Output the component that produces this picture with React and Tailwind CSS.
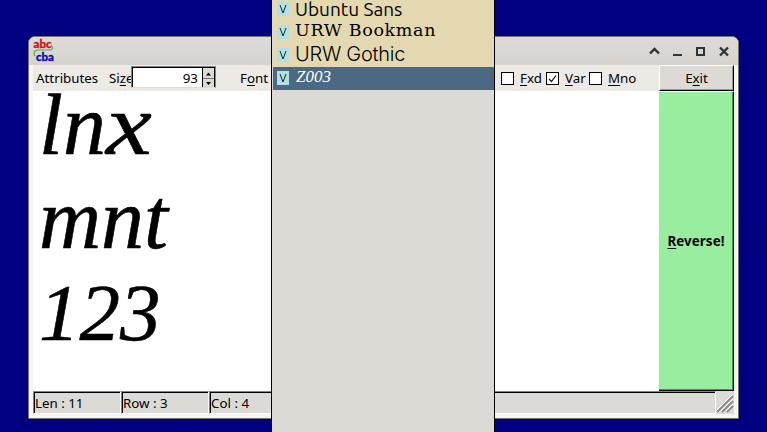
import React from "react";

const fontRows = [
  { name: "Ubuntu Sans", cls: "font-['Ubuntu_Sans','Ubuntu','Noto_Sans',sans-serif] text-[19px] tracking-[0px] top-[0px]" },
  { name: "URW Bookman", cls: "font-['URW_Bookman','DejaVu_Serif',serif] text-[17.5px] tracking-[0.65px] top-[-2px]" },
  { name: "URW Gothic", cls: "font-['Inter',sans-serif] font-light text-[20px] tracking-[-0.25px] top-[-1px]" },
  { name: "Z003", cls: "font-['Z003','Liberation_Serif',serif] italic text-[17px] top-[-2px] left-[1px]", selected: true },
];

function U({ children }) {
  return <span className="underline decoration-1 underline-offset-2">{children}</span>;
}

function AppIcon() {
  return (
    <svg width="24" height="24" viewBox="0 0 24 24" className="relative top-[-1px] shrink-0">
      <path d="M19 7 Q23 12 17 12 H6 Q0 13 3 18" fill="none" stroke="#4caf50" strokeWidth="1.2" />
      <text x="1.5" y="10" textLength="18" lengthAdjust="spacingAndGlyphs" fontFamily="Lato" fontWeight="900" fontSize="11.5" fill="#d40f1c" stroke="#d40f1c" strokeWidth=".3">abc</text>
      <text x="4" y="22.5" textLength="18" lengthAdjust="spacingAndGlyphs" fontFamily="Lato" fontWeight="900" fontSize="11.5" fill="#0c0ca8" stroke="#0c0ca8" strokeWidth=".3">cba</text>
    </svg>
  );
}

function WindowControls() {
  return (
    <svg width="84" height="14" viewBox="0 0 84 14" fill="none" stroke="#2e3436" strokeWidth="2">
      <path d="M2 9.5 L6.5 5 L11 9.5" strokeWidth="2.4" />
      <path d="M25 11 H34" />
      <path d="M49 4 H56 V11 H49 Z" />
      <path d="M72 3.5 L80 11.5 M80 3.5 L72 11.5" strokeWidth="2.4" />
    </svg>
  );
}

function Check({ checked }) {
  return (
    <span className="flex h-[13px] w-[13px] shrink-0 items-center justify-center border border-black bg-white">
      {checked && (
        <svg width="9" height="9" viewBox="0 0 9 9" fill="none" stroke="#111" strokeWidth="1.2">
          <path d="M1 5 L3.5 7.5 L8 1.5" />
        </svg>
      )}
    </span>
  );
}

function VIcon() {
  return (
    <svg width="12" height="14" viewBox="0 0 12 14" className="relative top-[-1px] shrink-0">
      <rect width="12" height="14" fill="#b0e0e6" />
      <path d="M3 3 L6 11 L9 3" fill="none" stroke="#18282c" strokeWidth="1" />
    </svg>
  );
}

function Cell({ children, cls }) {
  return (
    <div className={"h-[23px] border border-t-[#85837f] border-l-[#85837f] border-r-white border-b-white pl-[1px] leading-[22px] shadow-[inset_1px_1px_#000] " + cls}>
      {children}
    </div>
  );
}

export default function App() {
  return (
    <div className="relative h-[432px] w-[767px] overflow-hidden bg-[#000080] pl-[28px] pt-[36px] font-['Noto_Sans',sans-serif] text-[13.33px] text-black">
      <div className="flex h-[383px] w-[711px] flex-col rounded-t-[7px] border border-[#77736f] bg-[#f6f5f4]">
        <div className="flex h-[28px] shrink-0 items-center justify-between rounded-t-[6px] bg-gradient-to-b from-[#dedad7] to-[#d6d2ce] pl-[3px] pr-[6px]">
          <AppIcon />
          <WindowControls />
        </div>

        <div className="ml-[4px] flex h-[326px] w-[701px] shrink-0">
          <div className="flex w-[626px] flex-col bg-white">
            <div className="flex h-[26px] shrink-0 items-center bg-[#edeae6] pl-[3px] whitespace-nowrap">
              <span className="relative top-[1px] w-[73px]">Attributes</span>
              <span className="relative top-[1px] w-[22px]">Si<U>z</U>e</span>
              <div className="relative top-[-1px] flex h-[22px] w-[85px] border border-t-[#85837f] border-l-[#85837f] border-r-[#85837f] border-b-[#ddd] bg-white shadow-[inset_1px_1px_#000]">
                <span className="flex-1 pr-[4px] text-right leading-[23px]">93</span>
                <span className="mt-[1px] flex w-[13px] border-l border-r border-black bg-[#dcdad5]">
                  <svg width="11" height="19" viewBox="0 0 11 19">
                    <path d="M3 7.5 L5.5 4.5 L8 7.5 Z M3 14 L5.5 17 L8 14 Z" />
                    <path d="M0 10.5 H11" stroke="#777" />
                  </svg>
                </span>
              </div>
              <span className="relative top-[1px] ml-[24px] w-[261px]">F<U>o</U>nt</span>
              <Check />
              <span className="relative top-[1px] ml-[6px] w-[26px]"><U>F</U>xd</span>
              <Check checked />
              <span className="relative top-[1px] ml-[6px] w-[24px]"><U>V</U>ar</span>
              <Check />
              <span className="relative top-[1px] ml-[6px]"><U>M</U>no</span>
            </div>
            <div className="flex h-[300px] flex-col overflow-hidden pl-[6px] font-['Z003','Liberation_Serif',serif] text-[86px] italic leading-[94px] [-webkit-text-stroke:0.6px_black]">
              <div className="mt-[-13px]">ln<span className="inline-block origin-left scale-x-[1.2]">x</span></div>
              <div>mnt</div>
              <div className="text-[81px]">123</div>
            </div>
          </div>
          <div className="flex w-[75px] flex-col">
            <div className="flex h-[26px] shrink-0 items-center justify-center border-t border-l border-r border-b border-t-white border-l-white border-r-black border-b-black bg-[#dcdad5] shadow-[inset_-1px_-1px_#999]">
              <span className="relative top-[1px]">E<U>x</U>it</span>
            </div>
            <div className="flex flex-1 items-center justify-center border-t border-r border-b border-t-white border-r-black border-b-black bg-[#98ee9e] font-bold shadow-[inset_-1px_-1px_#30a048]">
              <span className="relative top-[1px] tracking-[0.1px]"><U>R</U>everse!</span>
            </div>
          </div>
        </div>

        <div className="ml-[4px] flex h-[23px] w-[701px] shrink-0 bg-[#dcdad5]">
          <Cell cls="w-[88px]">Len : 11</Cell>
          <Cell cls="w-[88px]">Row : 3</Cell>
          <Cell cls="w-[507px]">Col : 4</Cell>
          <svg width="18" height="23" viewBox="0 0 18 23" fill="none">
            <path d="M1 21 L17 5 M6 21 L17 10 M11 21 L17 15" stroke="#8e8c88" strokeWidth="2" />
            <path d="M0 20 L16 4 M5 20 L17 8 M10 20 L17 13" stroke="#fff" strokeWidth="1" />
          </svg>
        </div>
      </div>

      <div className="absolute left-[271px] top-[-2px] h-[436px] w-[224px] border-l border-r border-black bg-[#dcdad5] pl-[1px]">
        {fontRows.map((r) => (
          <div
            key={r.name}
            className={"flex h-[23px] items-center gap-[6px] pl-[4px] whitespace-nowrap " + (r.selected ? "bg-[#4b6983] text-white" : "bg-[#e4d8b0]")}
          >
            <VIcon />
            <span className={"relative leading-[23px] " + r.cls}>{r.name}</span>
          </div>
        ))}
      </div>
    </div>
  );
}
